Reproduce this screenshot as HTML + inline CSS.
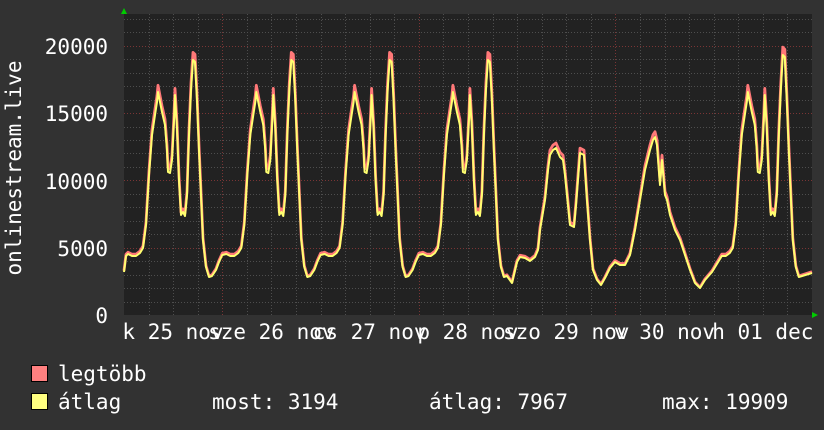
<!DOCTYPE html>
<html><head><meta charset="utf-8"><style>
html,body{margin:0;padding:0;background:#323232;}
svg{display:block}
text{font-family:"DejaVu Sans Mono","Liberation Mono",monospace;font-size:21px;fill:#fff}
</style></head><body>
<svg id="g" width="824" height="430" xmlns="http://www.w3.org/2000/svg">
<rect width="824" height="430" fill="#323232"/>
<rect x="124" y="14" width="688" height="301" fill="#222"/>
<g id="grid"></g>
<polyline id="red" fill="none" stroke="#ff7878" stroke-width="2.8" stroke-linejoin="round"/>
<polyline id="yel" fill="none" stroke="#ffff70" stroke-width="2" stroke-linejoin="round"/>
<polygon points="121,14 127,14 124,8" fill="#00cc00"/>
<polygon points="812,312 812,318 818,315" fill="#00cc00"/>
<text x="108" y="54" text-anchor="end">20000</text>
<text x="108" y="121" text-anchor="end">15000</text>
<text x="108" y="189" text-anchor="end">10000</text>
<text x="108" y="256" text-anchor="end">5000</text>
<text x="108" y="323" text-anchor="end">0</text>
<text transform="translate(21,168) rotate(-90)" text-anchor="middle">onlinestream.live</text>
<g id="xl"></g>
<rect x="31.5" y="365.5" width="16" height="16" fill="#ff8080" stroke="#000"/>
<rect x="31.5" y="393.5" width="16" height="16" fill="#ffff80" stroke="#000"/>
<text x="58" y="381">legtöbb</text>
<text x="58" y="409">átlag</text>
<text x="212" y="409">most: 3194</text>
<text x="429" y="409">átlag: 7967</text>
<text x="662" y="409">max: 19909</text>
</svg>
<script>
var NS="http://www.w3.org/2000/svg",grid=document.getElementById('grid');
function L(x1,y1,x2,y2,c){var l=document.createElementNS(NS,'line');l.setAttribute('x1',x1);l.setAttribute('y1',y1);l.setAttribute('x2',x2);l.setAttribute('y2',y2);l.setAttribute('stroke',c);l.setAttribute('stroke-width',1);l.setAttribute('stroke-dasharray','1,2');grid.appendChild(l);}
for(var i=1;i<=22;i++){var y=Math.round(315-i*13.46)+0.5;L(124,y,812,y,i%5==0?'#7a3535':'#4e4e4e');}
for(var k=1;k<28;k++){var x=Math.round(124+k*24.57)+0.5;L(x,14,x,315,(k%8==4)?'#7a3535':'#4e4e4e');}
var T=[[0,255],[4,254],[8,256],[12,256],[16,253],[19,248],[22,225],[25,175],[28,135],[31,115],[33,102],[34,92],[36,102],[38,112],[41,125],[43,150],[44,172],[46,173],[48,160],[50,120],[51,95],[53,128],[55,180],[57,215],[59,212],[61,216],[63,195],[65,135],[67,90],[69,60],[71,62],[73,100],[75,150],[77,195],[79,240],[82,267],[85,277],[88,276],[92,270],[95,262]];
var P=[[124,272],[126,256]];
function day(k){var d0=124+98.3*k;T.forEach(function(p){if(k==0&&p[0]<3)return;P.push([d0+p[0],p[1]]);});}
day(0);day(1);day(2);
var d3=124+98.3*3;T.forEach(function(p){if(p[0]>88)return;P.push([d3+p[0],p[1]]);});
var D=[[512,283],[517,262],[520,257],[525,258],[530,261],[535,257],[538,250],[540,230],[545,200],[548,170],[550,155],[553,150],[556,148],[560,157],[563,160],[565,175],[567,195],[570,225],[574,227],[576,205],[580,153],[584,155],[587,200],[590,240],[593,270],[597,280],[601,285],[605,278],[610,268],[615,262],[620,265],[625,265],[630,255],[635,230],[640,200],[645,170],[650,150],[653,140],[655,137],[657,145],[660,185],[662,160],[665,195],[667,200],[670,215],[675,230],[680,240],[685,255],[690,270],[695,283],[700,288],[705,280],[712,272]];
P=P.concat(D);
var d0=124+98.3*6;T.forEach(function(p){if(p[0]<6||p[0]>86)return;var y=p[1];if(y<80)y-=5;P.push([d0+p[0],y]);});
P.push([812,273]);
document.getElementById('yel').setAttribute('points',P.map(function(p){return p[0].toFixed(1)+','+p[1];}).join(' '));
document.getElementById('red').setAttribute('points',P.map(function(p){return p[0].toFixed(1)+','+(p[1]-(315-p[1])*0.03).toFixed(1);}).join(' '));
var labs=["k 25 nov","sze 26 nov","cs 27 nov","p 28 nov","szo 29 nov","v 30 nov","h 01 dec"],xl=document.getElementById('xl');
labs.forEach(function(s,i){var t=document.createElementNS(NS,'text');t.setAttribute('x',124+98.3*i+49);t.setAttribute('y',339);t.setAttribute('text-anchor','middle');t.textContent=s;xl.appendChild(t);});
</script>
</body></html>
